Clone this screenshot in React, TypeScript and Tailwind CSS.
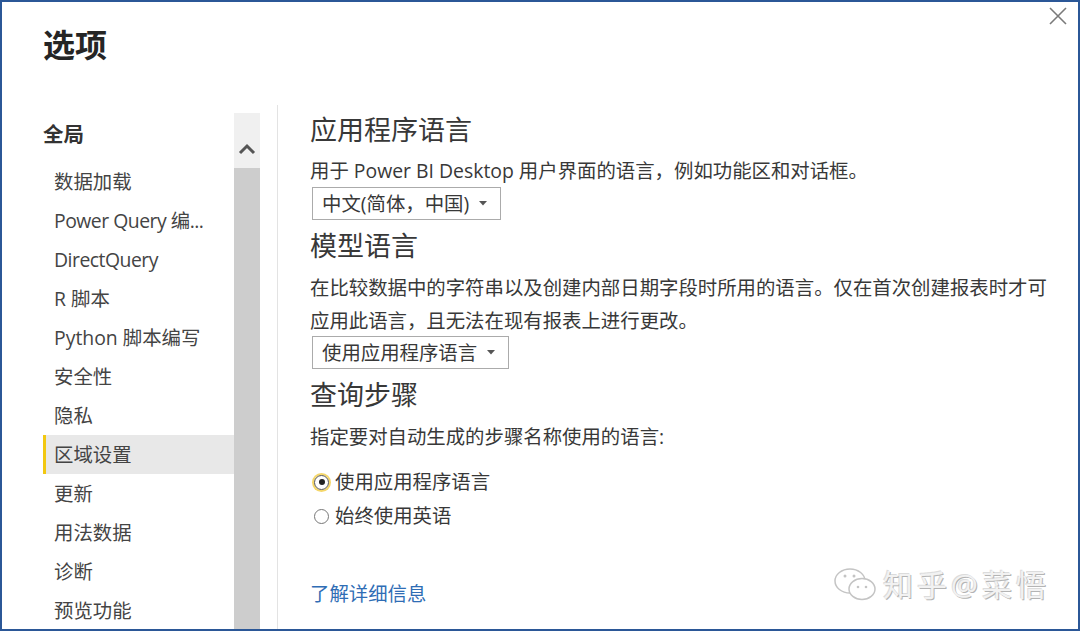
import React from "react";

const FONT = { fontFamily: '"Open Sans", "Noto Sans CJK SC", sans-serif' };

const navItems = [
  "数据加载",
  "Power Query 编...",
  "DirectQuery",
  "R 脚本",
  "Python 脚本编写",
  "安全性",
  "隐私",
  "区域设置",
  "更新",
  "用法数据",
  "诊断",
  "预览功能",
];

const tightItems = ["Power Query 编...", "DirectQuery"];

function Caret() {
  return (
    <svg width="8" height="5" viewBox="0 0 8 5" className="shrink-0">
      <path d="M0 0 L8 0 L4 4.5 Z" fill="#555" />
    </svg>
  );
}

function Dropdown({ label, width }: { label: string; width: string }) {
  return (
    <div
      className={`ml-[2px] flex h-[33px] items-center justify-between border border-[#ababab] pl-[9px] pr-[13px] text-[19.4px] leading-[30px] text-[#383838] ${width}`}
    >
      <span>{label}</span>
      <Caret />
    </div>
  );
}

function Radio({ checked, label }: { checked: boolean; label: string }) {
  return (
    <div className="flex h-[34px] items-center">
      <div
        className={`ml-[4px] flex h-[15px] w-[15px] items-center justify-center rounded-full border-[1.5px] ${
          checked
            ? "border-[#555] shadow-[0_0_0_2px_#f5d76a]"
            : "border-[#777]"
        }`}
      >
        {checked && <div className="h-[6px] w-[6px] rounded-full bg-[#222]" />}
      </div>
      <span className="ml-[6px] text-[19.4px] leading-[30px] text-[#383838]">{label}</span>
    </div>
  );
}

export default function App() {
  return (
    <div
      style={FONT}
      className="relative h-[631px] w-[1080px] overflow-hidden border-2 border-[#2b5797] bg-white"
    >
      {/* close button */}
      <div className="absolute right-[10px] top-[4px]">
        <svg width="20" height="20" viewBox="0 0 20 20">
          <path d="M2 2 L18 18 M18 2 L2 18" stroke="#7a7a7a" strokeWidth="1.6" />
        </svg>
      </div>

      {/* header */}
      <div className="h-[103px] pl-[41px] pt-[23px]">
        <h1 className="text-[32px] font-bold leading-[40px] text-[#252525]">选项</h1>
      </div>

      {/* body */}
      <div className="flex h-[524px]">
        {/* sidebar */}
        <div className="flex pl-[41px]">
          <div className="w-[191px]">
            <div className="pt-[15px] text-[20.5px] font-bold leading-[28px] text-[#333]">全局</div>
            <div className="mt-[14px]">
              {navItems.map((item) => {
                const selected = item === "区域设置";
                const tight = tightItems.includes(item);
                return (
                  <div
                    key={item}
                    className={`flex h-[39px] items-center whitespace-nowrap text-[19.4px] text-[#444] ${
                      selected
                        ? "border-l-[3px] border-[#f2c811] bg-[#e8e8e8] pl-[8px]"
                        : "pl-[11px]"
                    } ${tight ? "tracking-[-0.5px]" : ""}`}
                  >
                    {item}
                  </div>
                );
              })}
            </div>
          </div>
          {/* scrollbar */}
          <div className="mt-[8px] flex w-[26px] flex-col">
            <div className="flex h-[55px] items-center justify-center bg-[#f0f0f0] pt-[16px]">
              <svg width="18" height="12" viewBox="0 0 18 12">
                <path d="M2 10 L9 3 L16 10" stroke="#555" strokeWidth="3" fill="none" />
              </svg>
            </div>
            <div className="flex-1 bg-[#cdcdcd]" />
          </div>
        </div>
        {/* divider */}
        <div className="ml-[17px] w-px bg-[#e3e3e3]" />

        {/* content */}
        <div className="flex flex-col pl-[32px] text-[#383838]">
          <h2 className="pt-[7px] text-[27px] leading-[36px]">应用程序语言</h2>
          <p className="mt-[8px] text-[19.4px] leading-[30px]">
            用于 Power BI Desktop 用户界面的语言，例如功能区和对话框。
          </p>
          <div className="mt-[1px]">
            <Dropdown label="中文(简体，中国)" width="w-[189px]" />
          </div>

          <h2 className="mt-[8px] text-[27px] leading-[36px]">模型语言</h2>
          <p className="mt-[7px] text-[19.4px] leading-[33px]">
            在比较数据中的字符串以及创建内部日期字段时所用的语言。仅在首次创建报表时才可
            <br />
            应用此语言，且无法在现有报表上进行更改。
          </p>
          <div className="mt-[-1px]">
            <Dropdown label="使用应用程序语言" width="w-[197px]" />
          </div>

          <h2 className="mt-[8px] text-[27px] leading-[36px]">查询步骤</h2>
          <p className="mt-[9px] text-[19.4px] leading-[30px]">指定要对自动生成的步骤名称使用的语言:</p>
          <div className="mt-[13px]">
            <Radio checked label="使用应用程序语言" />
            <Radio checked={false} label="始终使用英语" />
          </div>

          <a className="mt-[46px] text-[19.4px] leading-[30px] text-[#2f6db5]">了解详细信息</a>
        </div>
      </div>

      {/* watermark */}
      <div className="pointer-events-none absolute bottom-[26px] right-[28px] flex items-center gap-[4px]">
        <svg width="46" height="36" viewBox="0 0 46 36">
          <ellipse cx="17" cy="14" rx="15" ry="12" fill="none" stroke="#c4c4c4" strokeWidth="1.5" />
          <ellipse cx="29" cy="22" rx="13" ry="10.5" fill="white" stroke="#c4c4c4" strokeWidth="1.5" />
          <circle cx="12" cy="9" r="1.5" fill="#c4c4c4" />
          <circle cx="21" cy="9" r="1.5" fill="#c4c4c4" />
          <circle cx="25" cy="20" r="1.3" fill="#c4c4c4" />
          <circle cx="33" cy="20" r="1.3" fill="#c4c4c4" />
        </svg>
        <span className="text-[30px] leading-[36px] tracking-[4px] text-[#f2f2f2] [text-shadow:1px_1px_0_#b4b4b4,-1px_-1px_0_#dcdcdc]">
          知乎@菜悟
        </span>
      </div>
    </div>
  );
}
